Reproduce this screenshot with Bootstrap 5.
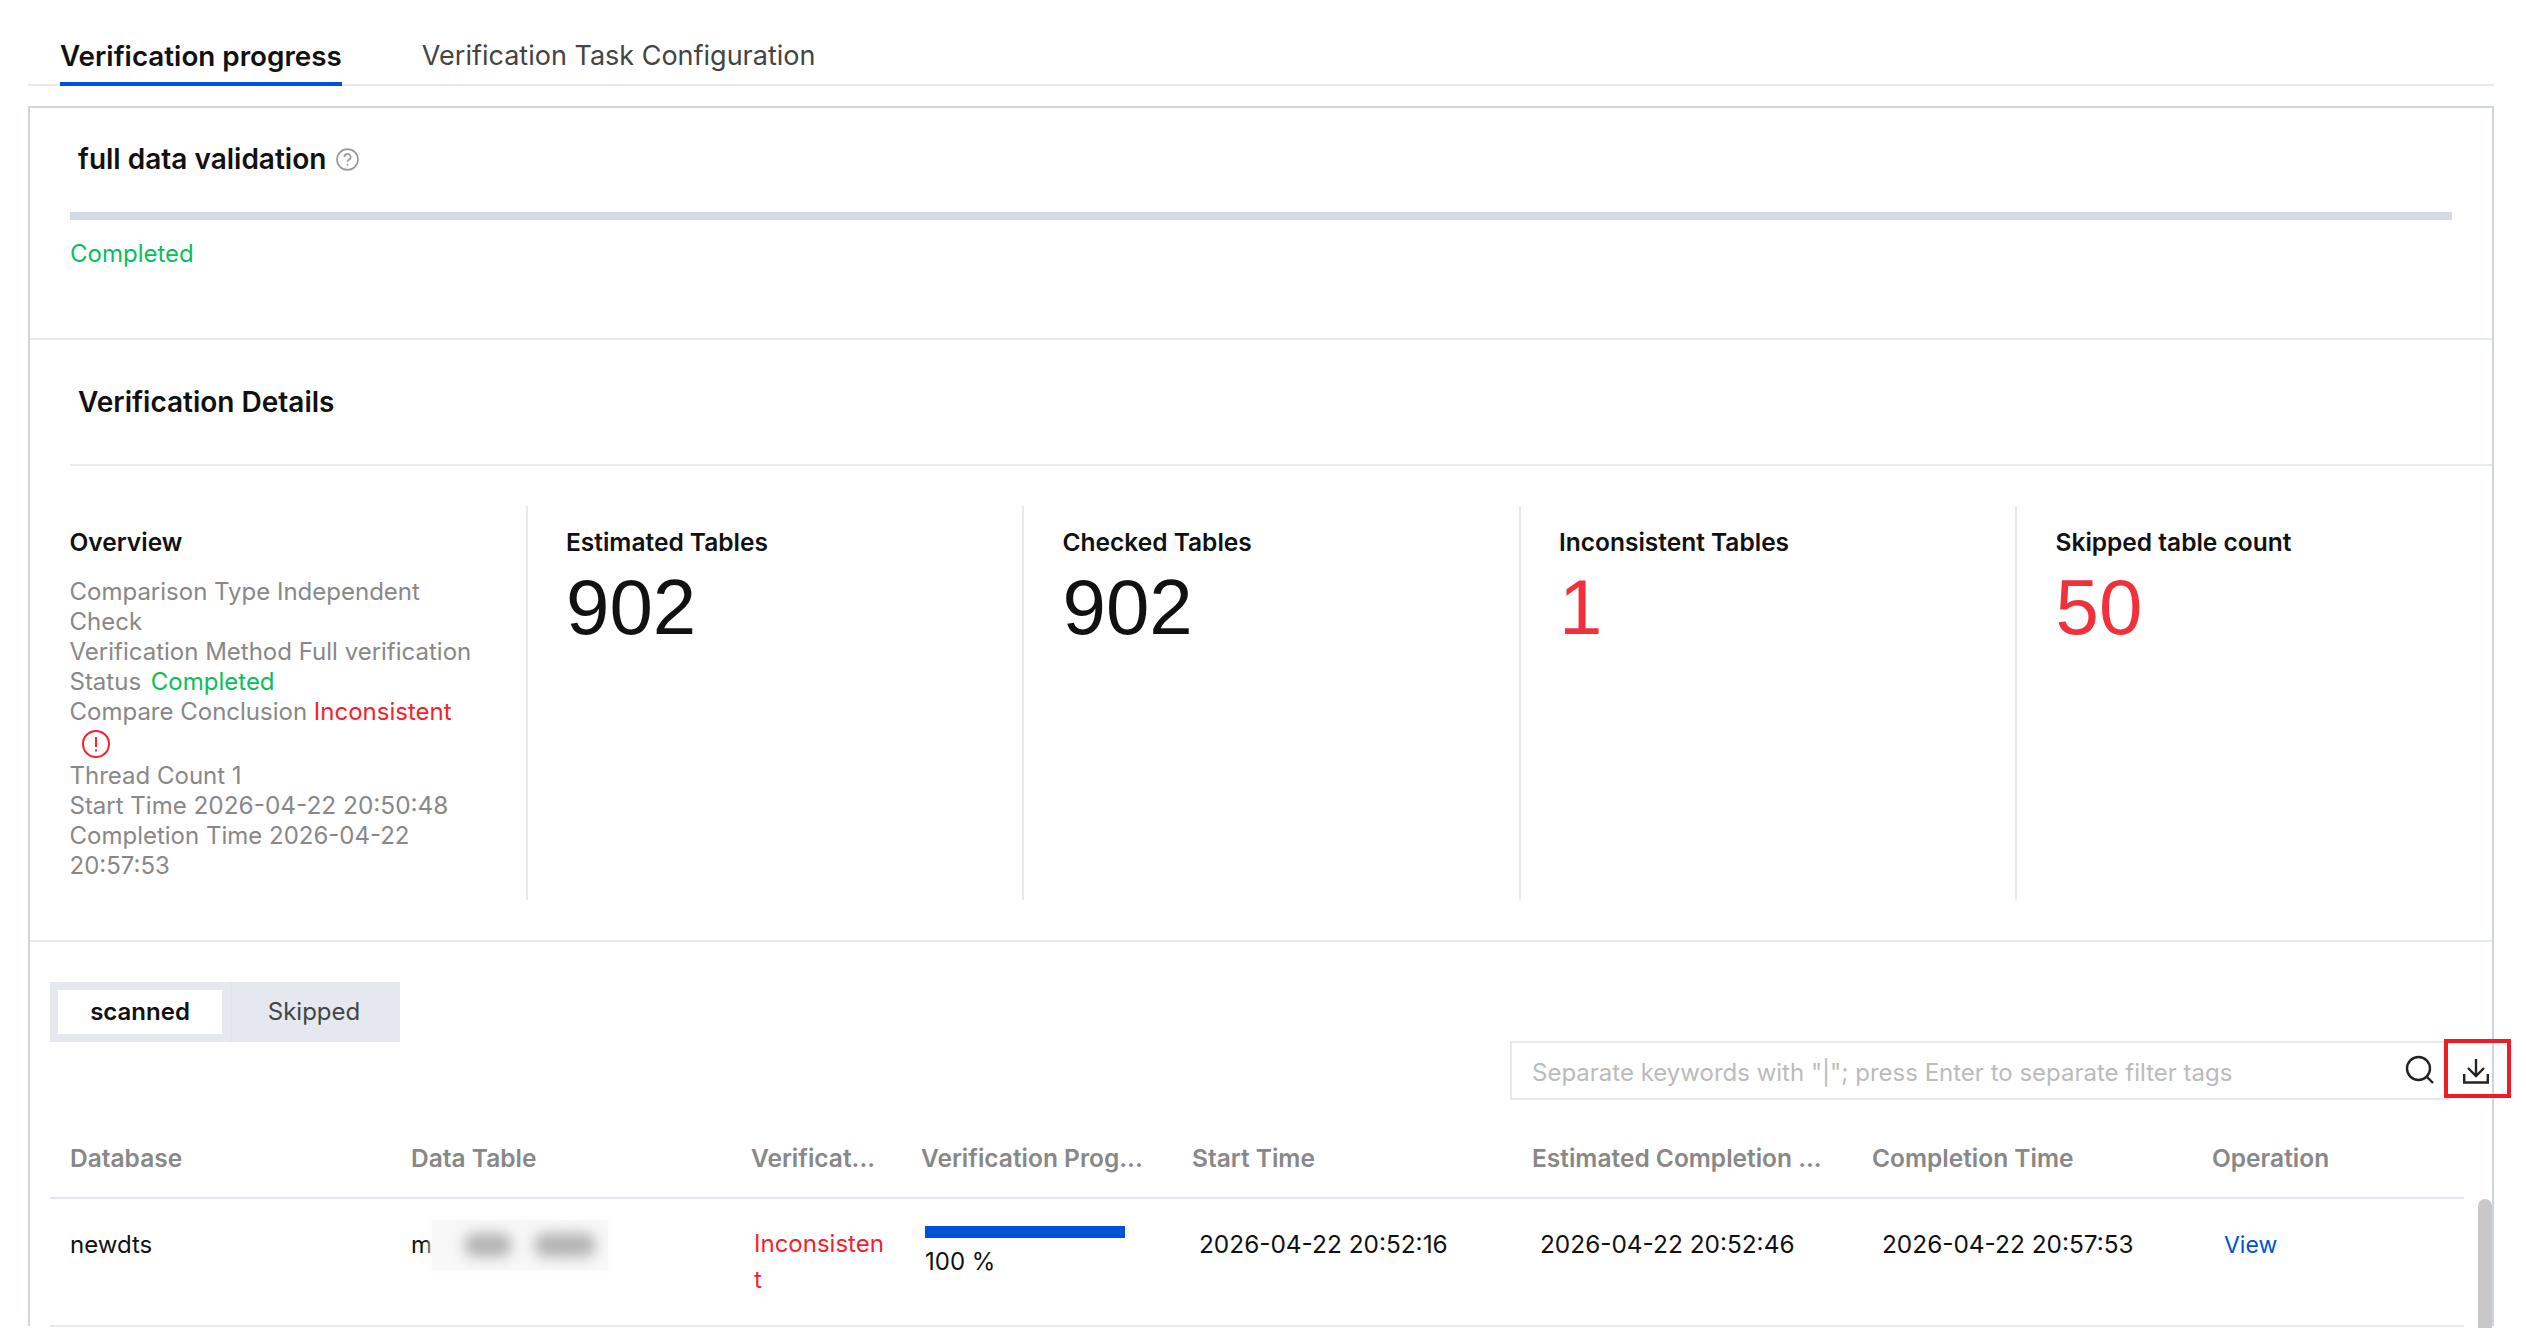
<!DOCTYPE html>
<html lang="en">
<head>
<meta charset="utf-8">
<title>Verification progress</title>
<link href="https://cdn.jsdelivr.net/npm/bootstrap@5.3.0/dist/css/bootstrap.min.css" rel="stylesheet">
<style>
html,body{height:1328px;overflow:hidden;background:#fff}
body{font-family:Inter,"Liberation Sans",sans-serif;font-size:24px;color:rgba(0,0,0,.9);line-height:30px}
.page-wrap{padding:0 32px 0 28px}
.tabs-bar{height:86px;border-bottom:2px solid #e7eaef;padding:0 0 0 32px;gap:80px}
.tab-item{height:86px;line-height:112px;font-size:27px;color:#444;white-space:nowrap;margin-bottom:-2px}
.tab-item.on{font-size:27.8px;font-weight:600;color:#111;border-bottom:4px solid #0052d9}
.panel{margin-top:20px;border:2px solid #cfd5de;border-bottom:0;height:1220px;width:2466px}
.sect-a{height:232px;border-bottom:2px solid #e7eaef;padding-left:40px;padding-right:40px}
.sect-title{font-size:28px;font-weight:600;color:#111;padding-left:8px}
.sect-a .sect-title{height:104px;line-height:100px;display:flex;align-items:center;gap:10px;padding-bottom:2px}
.track{height:8px;background:#d5d9e2}
.done-text{color:#0abf5b}
.bad-text{color:#f5222d}
.sect-a .done-text{margin-top:19px}
.detail-head{height:126px;line-height:125px;margin-left:40px;border-bottom:2px solid #e7eaef}
.stats{margin-top:40px;height:394px;margin-left:1px}
.stat-col{width:496.5px;flex:none;border-right:2px solid #e7eaef;padding:21px 36px 0 38.5px}
.stat-col:last-child{border-right:0}
.stat-label{font-size:24.5px;font-weight:600;color:#111;line-height:30px}
.stat-num{font-family:"Liberation Sans",Arial,sans-serif;font-size:78px;line-height:80px;color:#111;margin-top:10px}
.stat-num.bad-text{color:#f0303a}
.ov-lines{color:#888;margin-top:20px}
.stamp{font-size:24.4px;line-height:1}
.status-val{margin-left:3px}
.warn-ico{display:block;margin:3px 0 3px 12px}
.sect-c{margin-top:40px;border-top:2px solid #e7eaef;padding:40px 0 0 20px;position:relative;height:387px;overflow:visible}
.seg{width:350px;height:60px;background:#e5e8ef;padding:8px 0 8px 8px;align-items:stretch}
.seg-item{width:164px;line-height:44px;text-align:center;background:#fff;font-weight:600;color:#111}
.seg-off{flex:1;line-height:44px;text-align:center;color:#444;border-left:2px solid #e0e3ea;margin:-8px 0;padding-top:8px;margin-left:8px;padding-right:4px}
.toolbar{margin-top:-1px;justify-content:flex-end;position:relative}
.search-box{width:940px;height:59px;border:2px solid #e7eaef;border-right:0;padding:0 0 0 20px}
.search-box .form-control{border:0;padding:3px 0 0;box-shadow:none;font-size:24px;font-family:inherit;height:100%;background:transparent}
.search-box .form-control::placeholder{color:#bbb}
.search-ico{flex:none;margin:-2px 15px 0 12px}
.dl-btn{width:42px;padding:0 0 0 13px}
.red-note{position:absolute;right:-19px;top:-2px;width:67px;height:59px;border:4px solid #ee1c25}
.data-table{table-layout:fixed;width:2414px;margin:0;font-size:24px;line-height:30px}
.data-table th{height:98px;padding:18px 20px 0;font-size:24.5px;font-weight:600;color:#888;border-bottom:2px solid #e3e6ec;vertical-align:middle;white-space:nowrap}
.data-table td{height:128px;padding:31px 20px 0;border-bottom:2px solid #e7eaef;vertical-align:top;color:#111}
.data-table td.cell-fix{word-break:break-all;line-height:36px;padding:27px 14px 0 23px}
.data-table td.cell-prog{padding-top:27px;padding-left:24px}
.mask-wrap{display:inline-flex;align-items:center;height:30px}
.mask-box{width:176px;height:50px;background:#f8f8f8;display:flex;gap:22px;align-items:center;padding-left:32px;overflow:hidden;box-shadow:0 0 6px 2px #fbfbfb}
.mask-box i{display:block;width:48px;height:24px;background:#b3b3b3;border-radius:12px;filter:blur(7px)}
.mask-box i+i{width:62px}
.mini-bar{width:200px;height:12px;background:#0052d9;margin-bottom:9px}
.shift-a{padding-left:7px}
.shift-b{padding-left:8px}
.shift-c{padding-left:10px}
.view-link{color:#0052d9;text-decoration:none;padding-left:12px;font-size:23px}
.scroll-thumb{position:absolute;right:0;top:257px;width:14px;height:130px;background:#c8c8c8;border-radius:7px 7px 0 0}
</style>
</head>
<body>
<div class="page-wrap">
  <div class="tabs-bar d-flex">
    <div class="tab-item on">Verification progress</div>
    <div class="tab-item">Verification Task Configuration</div>
  </div>
  <div class="panel">
    <div class="sect-a">
      <div class="sect-title">full data validation
        <svg width="23" height="23" viewBox="0 0 22 22" fill="none" stroke="#999" stroke-width="1.6"><circle cx="11" cy="11" r="10"/><path d="M8 8.6a3 3 0 1 1 4.4 2.6c-.9.5-1.4 1-1.4 2"/><path d="M11 15.2v1.6"/></svg>
      </div>
      <div class="track"></div>
      <div class="done-text">Completed</div>
    </div>
    <div class="detail-head"><div class="sect-title">Verification Details</div></div>
    <div class="stats d-flex">
      <div class="stat-col">
        <div class="stat-label">Overview</div>
        <div class="ov-lines">
          <div>Comparison Type Independent Check</div>
          <div>Verification Method Full verification</div>
          <div>Status <span class="done-text status-val">Completed</span></div>
          <div>Compare Conclusion <span class="bad-text">Inconsistent</span>
            <svg class="warn-ico" width="28" height="28" viewBox="0 0 28 28" fill="none" stroke="#f5222d" stroke-width="2"><circle cx="14" cy="14" r="13"/><path d="M14 7v10M14 19.500v2"/></svg>
          </div>
          <div>Thread Count 1</div>
          <div>Start Time <span class="stamp">2026-04-22 20:50:48</span></div>
          <div>Completion Time 2026-04-22 20:57:53</div>
        </div>
      </div>
      <div class="stat-col"><div class="stat-label">Estimated Tables</div><div class="stat-num">902</div></div>
      <div class="stat-col"><div class="stat-label">Checked Tables</div><div class="stat-num">902</div></div>
      <div class="stat-col"><div class="stat-label">Inconsistent Tables</div><div class="stat-num bad-text">1</div></div>
      <div class="stat-col"><div class="stat-label">Skipped table count</div><div class="stat-num bad-text">50</div></div>
    </div>
    <div class="sect-c">
      <div class="seg d-flex"><div class="seg-item">scanned</div><div class="seg-off">Skipped</div></div>
      <div class="toolbar d-flex">
        <div class="search-box d-flex align-items-center">
          <input class="form-control" type="text" placeholder="Separate keywords with &quot;|&quot;; press Enter to separate filter tags">
          <svg class="search-ico" width="30" height="30" viewBox="0 0 30 30" fill="none" stroke="#222" stroke-width="2.4"><circle cx="13.500" cy="13.500" r="11.500"/><path d="M22 22l6 6"/></svg>
        </div>
        <div class="dl-btn d-flex align-items-center">
          <svg width="26" height="26" viewBox="0 0 26 26" fill="none" stroke="#222" stroke-width="2.400"><path d="M13 1v16M5 10l8 8 8-8"/><path d="M1.200 16v8.500h23.600V16"/></svg>
        </div>
        <div class="red-note"></div>
      </div>
      <table class="table data-table">
        <colgroup><col style="width:341px"><col style="width:340px"><col style="width:170px"><col style="width:271px"><col style="width:340px"><col style="width:340px"><col style="width:340px"><col style="width:272px"></colgroup>
        <thead><tr>
          <th>Database</th><th>Data Table</th><th>Verificat...</th><th>Verification Prog...</th><th>Start Time</th><th>Estimated Completion ...</th><th>Completion Time</th><th>Operation</th>
        </tr></thead>
        <tbody><tr>
          <td>newdts</td>
          <td><span class="mask-wrap">m<span class="mask-box"><i></i><i></i></span></span></td>
          <td class="bad-text cell-fix"><span class="bad-text">Inconsistent</span></td>
          <td class="cell-prog"><div class="mini-bar"></div><div>100 %</div></td>
          <td><span class="shift-a stamp">2026-04-22 20:52:16</span></td>
          <td><span class="shift-b stamp">2026-04-22 20:52:46</span></td>
          <td><span class="shift-c stamp">2026-04-22 20:57:53</span></td>
          <td><a class="view-link" href="#">View</a></td>
        </tr></tbody>
      </table>
      <div class="scroll-thumb"></div>
    </div>
  </div>
</div>
<script src="https://cdn.jsdelivr.net/npm/bootstrap@5.3.0/dist/js/bootstrap.bundle.min.js"></script>
</body>
</html>
